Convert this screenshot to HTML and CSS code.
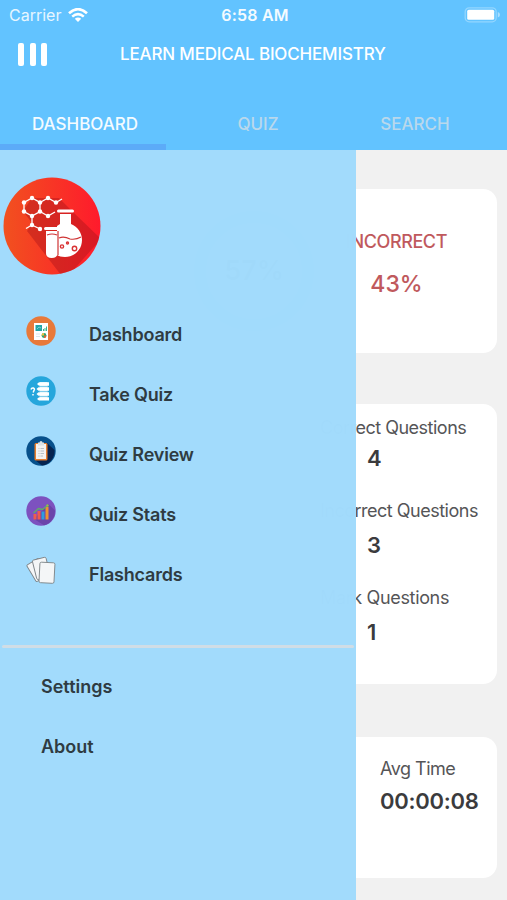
FILE: index.html
```
<!DOCTYPE html>
<html lang="en">
<head>
    <meta charset="UTF-8">
    <meta name="viewport" content="width=device-width, initial-scale=1.0">
    <title>Learn Medical Biochemistry</title>
    <link rel="stylesheet" href="styles.css">
</head>
<body>
    <header class="header">
        <div class="status-bar">
            <div class="carrier">
                <span>Carrier</span>
                <svg class="wifi" width="20" height="15" viewBox="0 0 20 15">
                    <path d="M1 5.200 Q10 -2.800 19 5.200" fill="none" stroke="#fff" stroke-width="2.700"/>
                    <path d="M4.200 8.600 Q10 3.600 15.800 8.600" fill="none" stroke="#fff" stroke-width="2.500"/>
                    <path d="M6.800 10.800 Q10 8 13.200 10.800 L10 14 Z" fill="#fff"/>
                </svg>
            </div>
            <div class="clock">6:58 AM</div>
            <svg class="battery" width="37" height="16" viewBox="0 0 37 16">
                <rect x="1.200" y=".8" width="31" height="14" rx="4" fill="none" stroke="#93d6ff" stroke-width="1.300"/>
                <rect x="3.200" y="2.800" width="27" height="10" rx="1.500" fill="#fff"/>
                <path d="M33.800 5 Q36 5.800 36 7.800 Q36 9.800 33.800 10.600 Z" fill="#a9deff"/>
            </svg>
        </div>
        <div class="title-bar">
            <button type="button" class="menu-btn"><i></i><i></i><i></i></button>
            <h1 class="title">LEARN MEDICAL BIOCHEMISTRY</h1>
        </div>
        <nav class="tabs">
            <a class="tab active">DASHBOARD</a>
            <a class="tab">QUIZ</a>
            <a class="tab">SEARCH</a>
        </nav>
        <div class="tab-line"></div>
    </header>

    <main class="content">
        <section class="card score">
            <div class="ring">57%</div>
            <div class="score-right">
                <div class="score-label">INCORRECT</div>
                <div class="score-value">43%</div>
            </div>
        </section>
        <section class="card questions">
            <div class="stat">
                <div class="label">Correct Questions</div>
                <div class="value">4</div>
            </div>
            <div class="stat">
                <div class="label">Incorrect Questions</div>
                <div class="value">3</div>
            </div>
            <div class="stat">
                <div class="label">Mark Questions</div>
                <div class="value">1</div>
            </div>
        </section>
        <section class="card time">
            <div class="label">Avg Time</div>
            <div class="value">00:00:08</div>
        </section>
    </main>

    <aside class="drawer">
        <svg class="logo" width="98" height="98" viewBox="0 0 98 98">
            <defs>
                <linearGradient id="red" x1="0" y1="0" x2="1" y2="0">
                    <stop offset="0" stop-color="#f1511f"/>
                    <stop offset="1" stop-color="#ff1a2c"/>
                </linearGradient>
                <clipPath id="disc"><circle cx="49" cy="49" r="48.500"/></clipPath>
            </defs>
            <circle cx="49" cy="49" r="48.500" fill="url(#red)"/>
            <g clip-path="url(#disc)">
                <path d="M56 21 L70 35 L98 62 L66 98 L58 98 L24 54 L29 46 L20 34 L29 21 Z" fill="#a8141a" opacity=".42"/>
            </g>
            <g fill="none" stroke="#fff" stroke-width="1.300">
                <path d="M29 21 L21 25.500 V34.500 L29 39 L37 34.500 V25.500 Z"/>
                <path d="M37 25.500 L45 21 L53 25.500 L59 22 M37 34.500 L45 39 L52 35 M29 39 V48 L23 51.500 M29 48 L37 52"/>
            </g>
            <g fill="#fff">
                <circle cx="29" cy="21" r="2.200"/><circle cx="21" cy="25.500" r="2.200"/><circle cx="21" cy="34.500" r="2.200"/>
                <circle cx="29" cy="39" r="2.200"/><circle cx="37" cy="34.500" r="2.200"/><circle cx="37" cy="25.500" r="2.200"/>
                <circle cx="45" cy="21" r="2.200"/><circle cx="53" cy="25.500" r="2.200"/><circle cx="45" cy="39" r="2.200"/>
                <circle cx="29" cy="48" r="2.200"/><circle cx="37" cy="52" r="2.200"/>
                <rect x="54" y="32.500" width="17" height="3" rx="1.500"/>
                <path d="M57 37 H68 V47 C75 50 79 56 79 63 C79 73 71 80 62 80 C58 80 56 79 54 78 V49 L57 47 Z"/>
                <rect x="41" y="50" width="16" height="3" rx="1.500"/>
                <path d="M43 54 H54.500 V76 Q54.500 81 48.700 81 Q43 81 43 76 Z"/>
            </g>
            <path d="M55 54 V78 M44 58 Q49 56 54 58 M56 61 Q61 59 67 62 Q73 63 78 60" fill="none" stroke="#cf3435" stroke-width="1.200"/>
            <g fill="none" stroke="#d93334" stroke-width="1.400">
                <circle cx="59" cy="69.500" r="1.600"/><circle cx="64.500" cy="66" r="1"/><circle cx="71.500" cy="71.500" r="2.200"/>
            </g>
        </svg>

        <ul class="menu">
            <li>
                <svg width="30" height="30" viewBox="0 0 30 30">
                    <circle cx="15" cy="15" r="14.700" fill="#e8793a"/>
                    <rect x="8" y="7" width="14" height="17" fill="#fff"/>
                    <rect x="9.500" y="9" width="6.500" height="6" fill="#23a4a6"/>
                    <path d="M11 13 L13 11 L15 12" stroke="#8cdbdc" fill="none" stroke-width=".8"/>
                    <path d="M17.500 15 V13 M19 15 V12 M20.500 15 V10.500" stroke="#3cb38b" stroke-width="1"/>
                    <path d="M10 18 H14 M10 20.500 H14" stroke="#d9e8eb" stroke-width="1"/>
                    <circle cx="18" cy="19.500" r="2.400" fill="#2aa873"/>
                    <path d="M18 19.500 V17 A2.500 2.500 0 0 0 15.500 19.500 Z" fill="#f2bd3c"/>
                    <path d="M18 19.500 H20.400 A2.400 2.400 0 0 1 18 22 Z" fill="#e45f32"/>
                </svg>
                <span>Dashboard</span>
            </li>
            <li>
                <svg width="30" height="30" viewBox="0 0 30 30">
                    <circle cx="15" cy="15" r="14.700" fill="#26a6dc"/>
                    <path d="M5 13.500 Q5.500 11.600 7.300 12 Q9.300 13 7.800 14.800 L7.200 16.600 M7 18 V19.500" fill="none" stroke="#fff" stroke-width="1.500"/>
                    <g fill="#fff">
                        <path d="M11 8 L13 6.200 H23 V9.800 H13 Z"/>
                        <path d="M10.500 13 L12.500 11.200 H23 V14.800 H12.500 Z"/>
                        <path d="M10.500 18 L12.500 16.200 H23 V19.800 H12.500 Z"/>
                        <path d="M11 23 L13 21.200 H23 V24.600 H13 Z"/>
                        <rect x="14" y="6" width="7.500" height="18" opacity=".7"/>
                    </g>
                    <path d="M13 10.500 H22 M13 15.500 H22 M13 20.500 H22" stroke="#70c5e8" stroke-width=".8"/>
                </svg>
                <span>Take Quiz</span>
            </li>
            <li>
                <svg width="30" height="30" viewBox="0 0 30 30">
                    <circle cx="15" cy="15" r="14.700" fill="#07508b"/>
                    <path d="M21 7 L28.500 14 A14.700 14.700 0 0 1 16 29.600 L9 24 Z" fill="#06234f"/>
                    <rect x="8.500" y="7" width="13" height="17.500" rx="1.500" fill="#e87f2e"/>
                    <rect x="10" y="8" width="10" height="15" fill="#f5f3f1"/>
                    <path d="M12 9.500 V6.500 H13.500 A1.500 1.500 0 0 1 16.500 6.500 H18 V9.500 Z" fill="#dde3e6"/>
                    <path d="M12.500 12.500 H13.500 M14.500 12.500 H18 M12.500 15 H13.500 M14.500 15 H18 M12.500 17.500 H13.500 M14.500 17.500 H18 M12.500 20 H13.500 M14.500 20 H17" stroke="#b3bbc1" stroke-width=".9"/>
                </svg>
                <span>Quiz Review</span>
            </li>
            <li>
                <svg width="30" height="30" viewBox="0 0 30 30">
                    <circle cx="15" cy="15" r="14.700" fill="#7d51bf"/>
                    <path d="M22.500 8 L29 14.500 A14.700 14.700 0 0 1 18 29.300 L8 23 Z" fill="#6b43aa"/>
                    <rect x="7.500" y="18" width="3" height="5.500" fill="#ef5b4c"/>
                    <rect x="11.500" y="15" width="3" height="8.500" fill="#ef5b4c"/>
                    <rect x="15.500" y="15.500" width="3" height="8" fill="#2d9ee0"/>
                    <rect x="19.500" y="11" width="3" height="12.500" fill="#ee9332"/>
                    <path d="M7.500 17 L12.500 12.500 L16.500 13.500 L21.500 9.500" fill="none" stroke="#61ae66" stroke-width="1.300"/>
                    <circle cx="21.500" cy="9.500" r="1.200" fill="#8fbf4e"/>
                </svg>
                <span>Quiz Stats</span>
            </li>
            <li>
                <svg width="30" height="30" viewBox="0 0 30 30" fill="#f4f6f7" stroke="#7c8387" stroke-width=".9">
                    <rect x="4.500" y="4" width="14" height="19.500" rx="1.500" transform="rotate(-31 12 14)"/>
                    <rect x="8.500" y="2.500" width="14" height="20" rx="1.500" transform="rotate(-14 15 13)"/>
                    <rect x="13.500" y="6.500" width="15" height="20.500" rx="1.500" transform="rotate(3 21 16)"/>
                </svg>
                <span>Flashcards</span>
            </li>
        </ul>
        <hr class="divider">
        <ul class="menu-extra">
            <li>Settings</li>
            <li>About</li>
        </ul>
    </aside>
</body>
</html>
```
FILE: styles.css
```
* {
    box-sizing: border-box;
    margin: 0;
    padding: 0;
}
body {
    width: 507px;
    height: 900px;
    overflow: hidden;
    position: relative;
    background: #f1f1f1;
    font-family: Inter, "Liberation Sans", sans-serif;
    color: #3b3b3d;
}
ul {
    list-style: none;
}
.header {
    height: 150px;
    background: #62c3ff;
    color: #fff;
}
.status-bar {
    height: 30px;
    padding: 0 6px 0 9px;
    display: grid;
    grid-template-columns: 1fr auto 1fr;
    align-items: center;
}
.carrier {
    display: flex;
    align-items: center;
    gap: 7px;
    font-size: 16px;
    color: #e6f6ff;
}
.clock {
    font-size: 16px;
    font-weight: 600;
    letter-spacing: .2px;
    color: #f4fbff;
}
.battery {
    justify-self: end;
}
.title-bar {
    height: 48px;
    padding: 0 18px;
    display: flex;
    align-items: center;
}
.menu-btn {
    display: flex;
    gap: 5.5px;
    width: 102px;
    background: transparent;
    border: 0;
}
.menu-btn i {
    width: 6px;
    height: 23px;
    background: #fff;
    border-radius: 2px;
}
.title {
    font-size: 17px;
    font-weight: 500;
    white-space: nowrap;
    letter-spacing: -.17px;
}
.tabs {
    height: 66px;
    padding-top: 26px;
    display: grid;
    grid-template-columns: 170px 176px 138px;
}
.tab {
    height: 40px;
    line-height: 40px;
    text-align: center;
    font-size: 17px;
    font-weight: 500;
    color: #b9d8ec;
}
.tab.active {
    color: #f4fbff;
}
.tab-line {
    width: 166px;
    height: 6px;
    background: #5cabf8;
}
.content {
    padding: 39px 10px 0;
}
.card {
    background: #fff;
    border-radius: 14px;
    white-space: nowrap;
}
.score {
    height: 164px;
    display: flex;
    align-items: center;
    padding-left: 184px;
}
.ring {
    width: 120px;
    height: 120px;
    flex: none;
    border: 12px solid #62c3ff;
    border-radius: 50%;
    text-align: center;
    line-height: 96px;
    font-size: 27px;
    font-weight: 600;
}
.score-right {
    width: 165px;
    text-align: center;
    color: #c0595d;
    font-weight: 500;
}
.score-label {
    font-size: 18px;
    line-height: 24px;
    letter-spacing: -.4px;
}
.score-value {
    font-size: 23px;
    line-height: 30px;
    margin: 15px 0 14px;
}
.label {
    font-size: 18px;
    line-height: 24px;
    letter-spacing: -.5px;
    color: #555557;
}
.value {
    font-size: 22px;
    line-height: 28px;
    font-weight: 600;
}
.questions {
    height: 280px;
    margin-top: 51px;
    padding: 12px 0 0 310px;
    display: flex;
    flex-direction: column;
    gap: 27px;
}
.questions .value {
    padding: 8px 0 0 47px;
}
.questions .stat:first-child .value {
    padding-top: 4px;
}
.questions .stat:last-child .label {
    letter-spacing: -.35px;
}
.time {
    height: 141px;
    margin-top: 53px;
    padding: 20px 0 0 370px;
}
.time .value {
    margin-top: 6px;
    letter-spacing: -.25px;
}
.drawer {
    position: absolute;
    top: 150px;
    left: 0;
    width: 356px;
    height: 750px;
    padding-top: 27px;
    background: rgba(161, 219, 252, .993);
    color: #2f3b42;
    font-size: 18px;
    font-weight: 600;
}
.logo {
    display: block;
    margin-left: 3px;
}
.menu {
    margin-top: 26px;
}
.menu li {
    height: 60px;
    padding-left: 26px;
    display: flex;
    align-items: center;
    gap: 33px;
    letter-spacing: -.2px;
}
.menu span {
    padding-top: 6px;
}
.divider {
    height: 3px;
    margin: 44px 2px 0;
    border: 0;
    border-radius: 2px;
    background: #d0dde6;
}
.menu-extra {
    padding: 9px 0 0 41px;
}
.menu-extra li {
    height: 60px;
    line-height: 60px;
}
```
